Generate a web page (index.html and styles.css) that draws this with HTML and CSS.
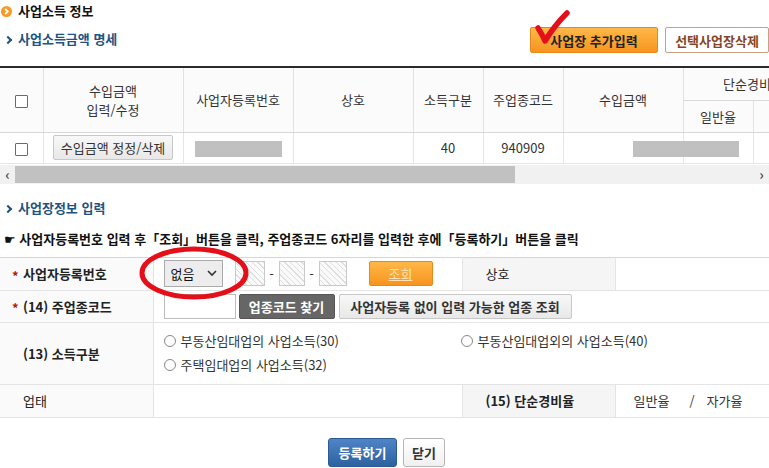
FILE: index.html
```html
<!DOCTYPE html>
<html lang="ko">
<head>
  <meta charset="UTF-8">
  <title>사업소득 정보</title>
  <link rel="stylesheet" href="styles.css">
</head>
<body>
  <div class="page">
    <div class="title-row">
      <div class="titles">
        <h2 class="page-title">
          <svg class="bullet-o" width="11" height="11" viewBox="0 0 11 11">
            <circle cx="5.5" cy="5.5" r="5.5" fill="#f39a2b"/>
            <path d="M4.2 3 L6.8 5.5 L4.2 8" fill="none" stroke="#fff" stroke-width="1.8"/>
          </svg>
          사업소득 정보
        </h2>
        <h3 class="sub-title">사업소득금액 명세</h3>
      </div>
      <div class="top-btns">
        <button class="btn btn-orange">사업장 추가입력</button>
        <button class="btn btn-outline">선택사업장삭제</button>
      </div>
    </div>

    <div class="grid-wrap">
      <div class="grid-scroll">
        <table class="grid">
          <colgroup>
            <col style="width:43px"><col style="width:140px"><col style="width:110px"><col style="width:120px">
            <col style="width:70px"><col style="width:80px"><col style="width:120px"><col style="width:70px"><col style="width:70px">
          </colgroup>
          <thead>
            <tr class="head-1">
              <th rowspan="2"><span class="chk"></span></th>
              <th rowspan="2" class="two-line">수입금액<br>입력/수정</th>
              <th rowspan="2">사업자등록번호</th>
              <th rowspan="2">상호</th>
              <th rowspan="2">소득구분</th>
              <th rowspan="2">주업종코드</th>
              <th rowspan="2">수입금액</th>
              <th colspan="2">단순경비율</th>
            </tr>
            <tr class="head-2">
              <th>일반율</th>
              <th>자가율</th>
            </tr>
          </thead>
          <tbody>
            <tr>
              <td><span class="chk"></span></td>
              <td><button class="btn btn-grey">수입금액 정정/삭제</button></td>
              <td><span class="mask mask-bizno"></span></td>
              <td></td>
              <td>40</td>
              <td>940909</td>
              <td class="amount-cell"><span class="mask mask-amount"></span></td>
              <td></td>
              <td></td>
            </tr>
          </tbody>
        </table>
      </div>
      <div class="hscroll">
        <span class="arrow">&lsaquo;</span>
        <div class="track"><div class="thumb"></div></div>
        <span class="arrow">&rsaquo;</span>
      </div>
    </div>

    <h3 class="sub-title sub-title-2">사업장정보 입력</h3>
    <p class="guide"><span class="hand">☛</span> 사업자등록번호 입력 후「조회」버튼을 클릭, 주업종코드 6자리를 입력한 후에「등록하기」버튼을 클릭</p>

    <table class="form">
      <colgroup>
        <col style="width:153px"><col style="width:309px"><col style="width:153px"><col style="width:154px">
      </colgroup>
      <tr class="row-1">
        <th><span class="req">*</span>사업자등록번호</th>
        <td>
          <div class="bizno">
            <span class="select">없음
              <svg width="10" height="7" viewBox="0 0 10 7"><path d="M1 1 L5 5 L9 1" fill="none" stroke="#333" stroke-width="1.6"/></svg>
            </span>
            <span class="hatch w30"></span><span class="dash">-</span>
            <span class="hatch w26"></span><span class="dash">-</span>
            <span class="hatch w28"></span>
            <button class="btn btn-orange btn-lookup">조회</button>
          </div>
        </td>
        <th class="mid normal">상호</th>
        <td></td>
      </tr>
      <tr class="row-2">
        <th><span class="req">*</span>(14) 주업종코드</th>
        <td colspan="3">
          <div class="code-line">
            <span class="input w72"></span>
            <button class="btn btn-dark">업종코드 찾기</button>
            <button class="btn btn-grey btn-wide">사업자등록 없이 입력 가능한 업종 조회</button>
          </div>
        </td>
      </tr>
      <tr class="row-3">
        <th>(13) 소득구분</th>
        <td colspan="3">
          <div class="radios">
            <label class="radio"><span class="dot"></span>부동산임대업의 사업소득(30)</label>
            <label class="radio"><span class="dot"></span>부동산임대업외의 사업소득(40)</label>
            <label class="radio"><span class="dot"></span>주택임대업의 사업소득(32)</label>
          </div>
        </td>
      </tr>
      <tr class="row-4">
        <th class="normal">업태</th>
        <td></td>
        <th class="mid">(15) 단순경비율</th>
        <td class="rates"><span>일반율</span><span class="slash">/</span><span>자가율</span></td>
      </tr>
    </table>

    <div class="actions">
      <button class="btn btn-blue">등록하기</button>
      <button class="btn btn-white">닫기</button>
    </div>

    <!-- hand-drawn marks over the screenshot -->
    <svg class="mark-check" width="40" height="40" viewBox="0 0 40 40">
      <path d="M4 18 Q8 24 11 31 Q20 16 33 3" fill="none" stroke="#e3101a" stroke-width="5.5" stroke-linecap="round" stroke-linejoin="round"/>
    </svg>
    <svg class="mark-circle" width="116" height="60" viewBox="0 0 116 60">
      <ellipse cx="57" cy="29" rx="52" ry="24" fill="none" stroke="#e3101a" stroke-width="5"/>
    </svg>
  </div>
</body>
</html>
```

FILE: styles.css
```css
* {
  box-sizing: border-box;
}

body {
  margin: 0;
  font-family: "Noto Sans CJK KR", "Noto Sans", sans-serif;
  font-size: 13px;
  color: #333;
  background: #fff;
  overflow: hidden;
}

.page {
  position: relative;
  width: 769px;
  height: 468px;
  overflow: hidden;
}

.btn {
  font-family: inherit;
  font-size: 13px;
  font-weight: bold;
  line-height: 1;
  cursor: pointer;
  padding: 0;
  border-radius: 2px;
}

/* top area */
.title-row {
  display: flex;
  justify-content: space-between;
  height: 66px;
}

.page-title {
  display: flex;
  align-items: center;
  gap: 6px;
  margin: 0;
  padding: 3px 0 0 1px;
  font-size: 13px;
  line-height: 16px;
  color: #111;
}

.sub-title {
  position: relative;
  margin: 12px 0 0;
  padding-left: 18px;
  font-size: 13px;
  line-height: 16px;
  color: #1e5482;
}

.sub-title::before {
  content: '';
  position: absolute;
  left: 5px;
  top: 6px;
  width: 4px;
  height: 4px;
  border-top: 2px solid #1e5482;
  border-right: 2px solid #1e5482;
  transform: rotate(45deg);
}

.top-btns {
  display: flex;
  gap: 7px;
  padding-top: 27px;
}

.btn-orange {
  height: 26px;
  width: 128px;
  border: 1px solid #e48a1c;
  background: linear-gradient(#ffb848, #f7941f);
  color: #222;
}

.btn-outline {
  height: 26px;
  width: 104px;
  border: 1px solid #c9a083;
  background: #fff;
  color: #86452a;
}

/* result grid */
.grid-scroll {
  width: 769px;
  overflow: hidden;
}

.grid {
  width: 823px;
  table-layout: fixed;
  border-collapse: collapse;
  border-top: 2px solid #2a2a2a;
}

.grid th {
  font-weight: normal;
  background: #fbfbfb;
  border-right: 1px solid #e2e2e2;
  border-bottom: 1px solid #d8d8d8;
  line-height: 17px;
  padding: 0;
  white-space: nowrap;
}

.grid th.two-line {
  line-height: 19px;
}

.grid .head-1 th {
  height: 33px;
}

.grid .head-2 th {
  height: 32px;
}

.grid td {
  height: 31px;
  padding: 0;
  text-align: center;
  border-right: 1px solid #e6e6e6;
  border-bottom: 1px solid #e6e6e6;
}

.chk {
  display: inline-block;
  width: 13px;
  height: 13px;
  border: 1px solid #6b6b6b;
  border-radius: 1px;
  background: #fff;
  vertical-align: middle;
}

.btn-grey {
  height: 25px;
  width: 120px;
  border: 1px solid #c8c8c8;
  background: linear-gradient(#f8f8f8, #e8e8e8);
  color: #333;
  font-weight: normal;
}

.mask {
  display: inline-block;
  height: 16px;
  background: #c0c0c0;
  vertical-align: middle;
}

.mask-bizno {
  width: 87px;
}

.amount-cell {
  position: relative;
}

.mask-amount {
  position: absolute;
  left: 69px;
  top: 8px;
  width: 106px;
}

.hscroll {
  display: flex;
  align-items: center;
  height: 19px;
  margin-top: 1px;
  background: #f1f1f1;
}

.hscroll .arrow {
  width: 15px;
  text-align: center;
  font-size: 14px;
  font-weight: bold;
  line-height: 19px;
  color: #505050;
}

.track {
  flex: 1;
  height: 17px;
}

.thumb {
  width: 500px;
  height: 17px;
  background: #c1c1c1;
}

.sub-title-2 {
  margin-top: 16px;
}

.guide {
  margin: 15px 0 0;
  padding-left: 4px;
  font-size: 13px;
  font-weight: bold;
  line-height: 16px;
  color: #111;
  white-space: nowrap;
}

.hand {
  font-family: "DejaVu Sans", sans-serif;
  font-size: 13px;
}

/* input form */
.form {
  width: 769px;
  margin-top: 9px;
  table-layout: fixed;
  border-collapse: collapse;
  border-top: 1px solid #d6d6d6;
}

.form th {
  text-align: left;
  padding: 0 0 0 23px;
  background: #fafafa;
  font-weight: bold;
  color: #222;
  border-right: 1px solid #e4e4e4;
  border-bottom: 1px solid #e4e4e4;
  position: relative;
}

.form th.mid {
  background: #f5f5f5;
  border-left: 1px solid #e4e4e4;
}

.form th.normal {
  font-weight: normal;
}

.form td {
  padding: 0 0 0 10px;
  border-bottom: 1px solid #e4e4e4;
}

.req {
  position: absolute;
  left: 12px;
  top: 50%;
  margin-top: -8px;
  color: #b01818;
  font-weight: bold;
}

.form .row-1 th,
.form .row-1 td {
  height: 33px;
}

.form .row-2 th,
.form .row-2 td {
  height: 32px;
}

.form .row-3 th,
.form .row-3 td {
  height: 62px;
}

.form .row-4 th,
.form .row-4 td {
  height: 33px;
}

.bizno,
.code-line {
  display: flex;
  align-items: center;
}

.select {
  display: flex;
  align-items: center;
  justify-content: space-between;
  width: 59px;
  height: 27px;
  padding: 0 5px 0 6px;
  border: 1px solid #aaa;
  background: #ededed;
  color: #111;
  margin-right: 12px;
}

.hatch {
  height: 25px;
  border: 1px solid #c9c9c9;
  background: repeating-linear-gradient(45deg, #fafafa 0 3px, #dedede 3px 4px);
}

.w30 { width: 30px; }
.w26 { width: 26px; }
.w28 { width: 28px; }

.dash {
  width: 14px;
  text-align: center;
  color: #333;
}

.btn-lookup {
  width: 64px;
  height: 25px;
  margin-left: 22px;
  color: #fde1b0;
  font-weight: normal;
  text-decoration: underline;
}

.input {
  height: 25px;
  border: 1px solid #bdbdbd;
  background: #fff;
}

.w72 { width: 72px; }

.btn-dark {
  width: 96px;
  height: 25px;
  margin-left: 3px;
  border: 1px solid #555;
  background: #666;
  color: #fff;
}

.btn-wide {
  width: 233px;
  margin-left: 4px;
  font-weight: bold;
}

.radios {
  display: grid;
  grid-template-columns: 297px auto;
  row-gap: 8px;
  color: #333;
}

.radio {
  display: flex;
  align-items: center;
  gap: 5px;
  line-height: 16px;
}

.dot {
  width: 12px;
  height: 12px;
  border: 1.5px solid #888;
  border-radius: 50%;
  background: #fff;
}

.rates {
  padding-left: 18px !important;
  color: #333;
}

.rates .slash {
  margin: 0 12px 0 20px;
}

/* bottom buttons */
.actions {
  display: flex;
  justify-content: center;
  gap: 6px;
  margin-top: 20px;
  padding-left: 4px;
}

.btn-blue {
  width: 69px;
  height: 29px;
  border: 1px solid #2c5a96;
  border-radius: 3px;
  background: linear-gradient(#4f84c6, #2e619f);
  color: #fff;
}

.btn-white {
  width: 42px;
  height: 29px;
  border: 1px solid #b5b5b5;
  border-radius: 3px;
  background: linear-gradient(#fff, #f0f0f0);
  color: #333;
}

/* red marks drawn over the capture */
.mark-check {
  position: absolute;
  left: 534px;
  top: 10px;
}

.mark-circle {
  position: absolute;
  left: 137px;
  top: 244px;
}
```
